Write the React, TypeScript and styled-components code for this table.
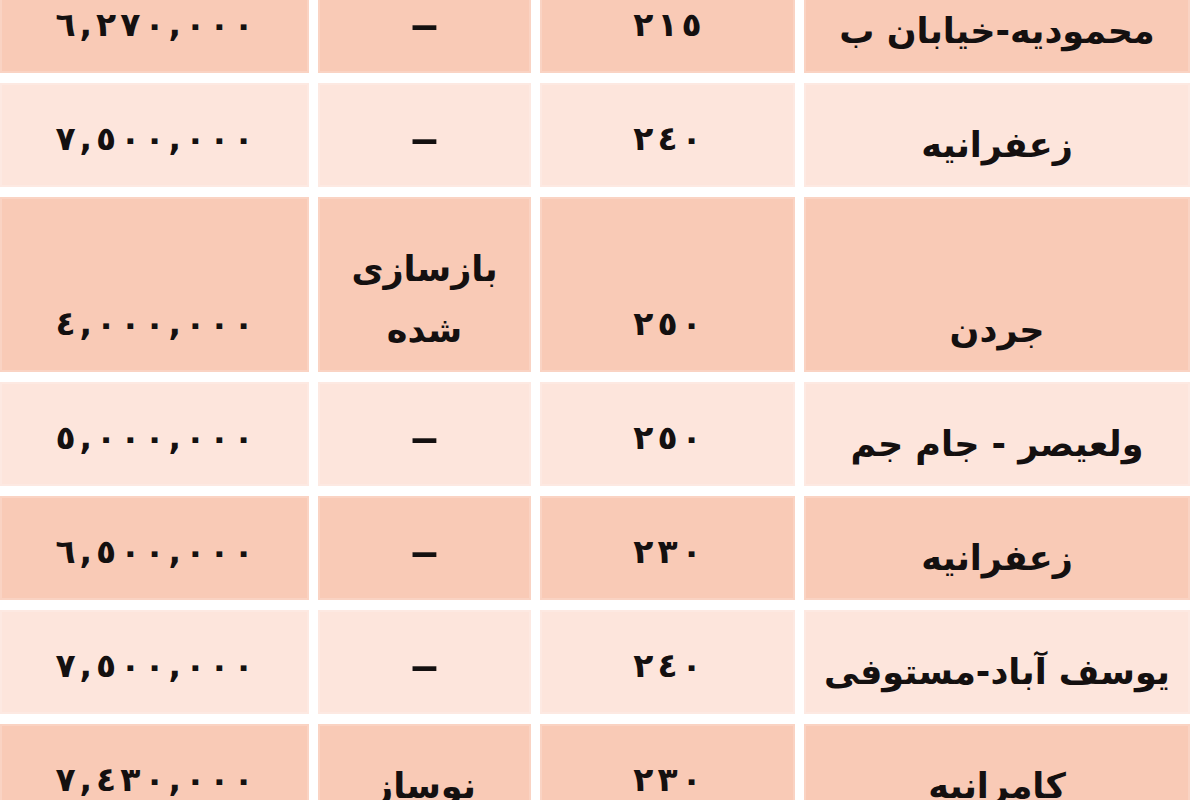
import React from "react";
import styled, { createGlobalStyle } from "styled-components";

const GlobalStyle = createGlobalStyle`
  html, body { margin: 0; padding: 0; background: #ffffff; }
  body { width: 1200px; height: 800px; overflow: hidden; font-family: "DejaVu Sans", sans-serif; }
`;

const Page = styled.div`
  width: 1200px;
  height: 800px;
  overflow: hidden;
  background: #ffffff;
`;

const Table = styled.div`
  direction: rtl;
  display: flex;
  flex-direction: column;
  gap: 10px;
  padding-right: 10px;
  margin-top: -31px;
`;

const Row = styled.div<{ $tall?: boolean }>`
  display: grid;
  grid-template-columns: 386px 255px 213px 309px;
  column-gap: 9px;
  height: ${(p) => (p.$tall ? 175 : 104)}px;
`;

const Cell = styled.div<{ $tone: "dark" | "light" }>`
  box-sizing: border-box;
  display: flex;
  flex-direction: column;
  align-items: center;
  justify-content: flex-end;
  gap: 23px;
  padding-bottom: 26px;
  background: ${(p) => (p.$tone === "dark" ? "#f9cab6" : "#fde5dc")};
  box-shadow: inset 0 0 0 2px rgba(255, 255, 255, 0.18);
  color: #141010;
  font-family: "DejaVu Sans", sans-serif;
  font-weight: bold;
  font-size: 30px;
  line-height: 44px;
  white-space: nowrap;
`;

const Place = styled.span`
  font-size: 35px;
  margin-bottom: -6px;
`;

const Num = styled.span`
  direction: ltr;
  display: inline-flex;
  gap: 4px;
  font-size: 33px;
`;

const Digit = styled.span`
  display: inline-block;
`;

const Dash = styled.span`
  font-size: 38px;
  transform: scaleX(1.6);
`;

type RowData = {
  place: string;
  area: string;
  status: string[];
  price: string;
  tone: "dark" | "light";
  tall?: boolean;
};

const rows: RowData[] = [
  { place: "محمودیه-خیابان ب", area: "٢١٥", status: ["–"], price: "٦,٢٧٠,٠٠٠", tone: "dark" },
  { place: "زعفرانیه", area: "٢٤٠", status: ["–"], price: "٧,٥٠٠,٠٠٠", tone: "light" },
  { place: "جردن", area: "٢٥٠", status: ["بازسازی", "شده"], price: "٤,٠٠٠,٠٠٠", tone: "dark", tall: true },
  { place: "ولعیصر - جام جم", area: "٢٥٠", status: ["–"], price: "٥,٠٠٠,٠٠٠", tone: "light" },
  { place: "زعفرانیه", area: "٢٣٠", status: ["–"], price: "٦,٥٠٠,٠٠٠", tone: "dark" },
  { place: "یوسف آباد-مستوفی", area: "٢٤٠", status: ["–"], price: "٧,٥٠٠,٠٠٠", tone: "light" },
  { place: "کامرانیه", area: "٢٣٠", status: ["نوساز"], price: "٧,٤٣٠,٠٠٠", tone: "dark" },
];

function Number({ value }: { value: string }) {
  return (
    <Num>
      {Array.from(value).map((ch, i) => (
        <Digit key={i}>{ch}</Digit>
      ))}
    </Num>
  );
}

export default function App() {
  return (
    <Page>
      <GlobalStyle />
      <Table>
        {rows.map((r, i) => (
          <Row key={i} $tall={r.tall}>
            <Cell $tone={r.tone}>
              <Place>{r.place}</Place>
            </Cell>
            <Cell $tone={r.tone}>
              <Number value={r.area} />
            </Cell>
            <Cell $tone={r.tone}>
              {r.status.map((s, j) =>
                s === "–" ? <Dash key={j}>{s}</Dash> : <Place key={j}>{s}</Place>
              )}
            </Cell>
            <Cell $tone={r.tone}>
              <Number value={r.price} />
            </Cell>
          </Row>
        ))}
      </Table>
    </Page>
  );
}
